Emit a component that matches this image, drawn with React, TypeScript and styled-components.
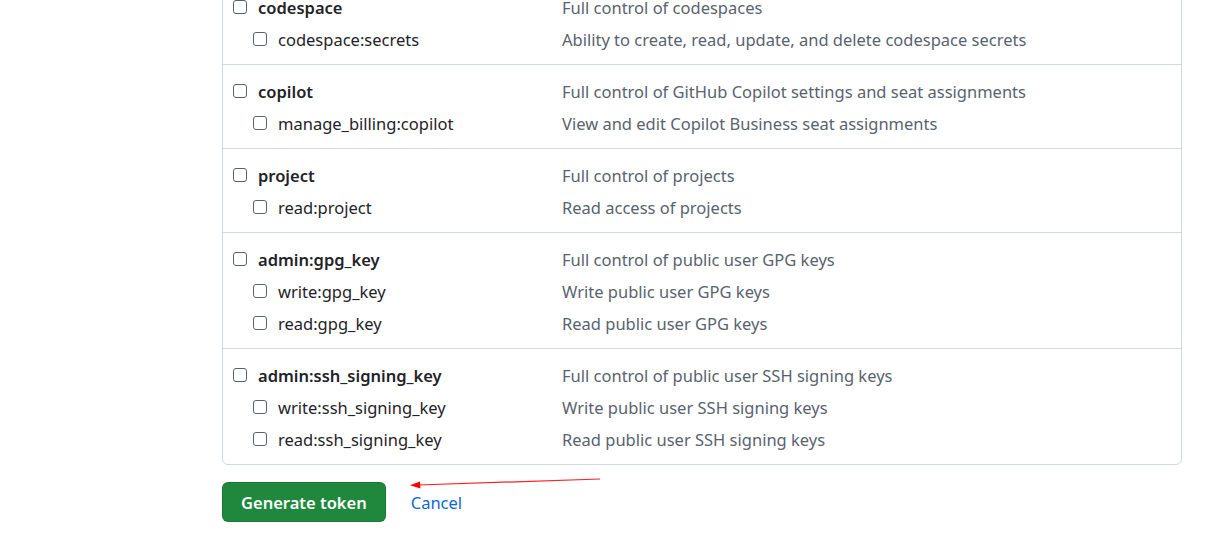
import React from 'react';
import styled, { createGlobalStyle } from 'styled-components';

const GlobalStyle = createGlobalStyle`
    body {
        margin: 0;
        background: #ffffff;
        font-family: "Noto Sans", "Liberation Sans", sans-serif;
        color: #1f2328;
    }
`;

interface IScope {
    name: string;
    desc: string;
    sub?: boolean;
}

const groups: IScope[][] = [
    [
        { name: 'codespace', desc: 'Full control of codespaces' },
        { name: 'codespace:secrets', desc: 'Ability to create, read, update, and delete codespace secrets', sub: true },
    ],
    [
        { name: 'copilot', desc: 'Full control of GitHub Copilot settings and seat assignments' },
        { name: 'manage_billing:copilot', desc: 'View and edit Copilot Business seat assignments', sub: true },
    ],
    [
        { name: 'project', desc: 'Full control of projects' },
        { name: 'read:project', desc: 'Read access of projects', sub: true },
    ],
    [
        { name: 'admin:gpg_key', desc: 'Full control of public user GPG keys' },
        { name: 'write:gpg_key', desc: 'Write public user GPG keys', sub: true },
        { name: 'read:gpg_key', desc: 'Read public user GPG keys', sub: true },
    ],
    [
        { name: 'admin:ssh_signing_key', desc: 'Full control of public user SSH signing keys' },
        { name: 'write:ssh_signing_key', desc: 'Write public user SSH signing keys', sub: true },
        { name: 'read:ssh_signing_key', desc: 'Read public user SSH signing keys', sub: true },
    ],
];

const Page = styled.div`
    width: 960px;
    margin: -20px 0 0 222px;
    position: relative;
`;

const ScopeBox = styled.div`
    border: 1px solid #d1d9e0;
    border-radius: 6px;
    background: #ffffff;
`;

const Group = styled.div`
    padding: 10px 10px 9px;
    & + & {
        border-top: 1px solid #d1d9e0;
    }
`;

const Row = styled.label`
    display: grid;
    grid-template-columns: 329px 1fr;
    align-items: center;
    height: 32px;
    font-size: 16.5px;
    cursor: pointer;
`;

const NameCell = styled.span<{ $sub?: boolean }>`
    display: flex;
    align-items: center;
    gap: 11px;
    padding-left: ${p => (p.$sub ? '20px' : '0')};
    font-weight: ${p => (p.$sub ? 400 : 600)};
    color: #1f2328;
`;

const Check = styled.input`
    appearance: none;
    margin: 0;
    width: 14px;
    height: 14px;
    border: 1px solid #59636e;
    border-radius: 3px;
    background: #ffffff;
    flex: none;
`;

const Desc = styled.span`
    color: #59636e;
`;

const Actions = styled.div`
    display: flex;
    align-items: center;
    gap: 25px;
    margin-top: 17px;
`;

const PrimaryButton = styled.button`
    height: 40px;
    padding: 0 18px;
    background: #1f883d;
    border: 1px solid rgba(31, 35, 40, 0.15);
    border-radius: 6px;
    color: #ffffff;
    font-family: inherit;
    font-size: 16.5px;
    font-weight: 600;
    cursor: pointer;
`;

const CancelLink = styled.a`
    color: #0969da;
    font-size: 16.5px;
    text-decoration: none;
`;

const Arrow = styled.svg`
    position: absolute;
    left: 186px;
    top: 494px;
    overflow: visible;
    pointer-events: none;
`;

export default function App() {
    return (
        <>
            <GlobalStyle />
            <Page>
                <ScopeBox>
                    {groups.map((g, gi) => (
                        <Group key={gi}>
                            {g.map(s => (
                                <Row key={s.name}>
                                    <NameCell $sub={s.sub}>
                                        <Check type="checkbox" />
                                        {s.name}
                                    </NameCell>
                                    <Desc>{s.desc}</Desc>
                                </Row>
                            ))}
                        </Group>
                    ))}
                </ScopeBox>
                <Actions>
                    <PrimaryButton>Generate token</PrimaryButton>
                    <CancelLink href="#">Cancel</CancelLink>
                </Actions>
                <Arrow width="200" height="20">
                    <line x1="192" y1="5" x2="10" y2="11" stroke="#ff2020" strokeWidth="1.2" />
                    <polygon points="2,11.3 12,7.5 12.5,14.5" fill="#ff0000" />
                </Arrow>
            </Page>
        </>
    );
}
